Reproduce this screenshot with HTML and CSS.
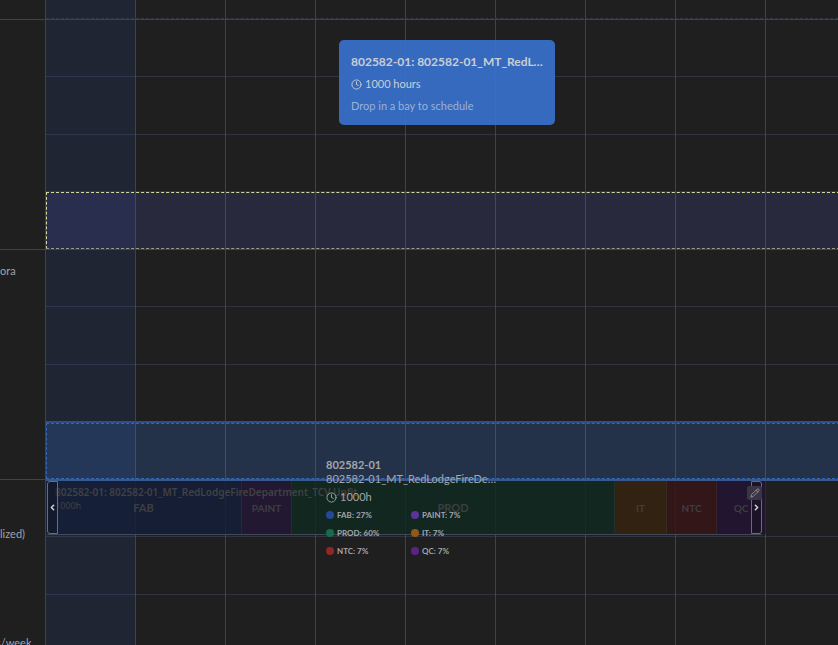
FILE: index.html
```html
<!DOCTYPE html>
<html lang="en">
<head>
<meta charset="utf-8">
<title>Bay schedule</title>
<link rel="stylesheet" href="styles.css">
</head>
<body>
<main class="board">
  <section class="team team-cut">
    <div class="team-label"></div>
    <div class="lanes"><div class="lane lane-idle"></div></div>
  </section>
  <section class="team">
    <div class="team-label"></div>
    <div class="lanes">
      <div class="lane"></div>
      <div class="lane"></div>
      <div class="lane"></div>
      <div class="lane lane-open"></div>
    </div>
  </section>
  <section class="team">
    <div class="team-label"><span class="label-name">ora</span></div>
    <div class="lanes">
      <div class="lane"></div>
      <div class="lane"></div>
      <div class="lane"></div>
      <div class="lane lane-target"></div>
    </div>
  </section>
  <section class="team">
    <div class="team-label"><span class="label-type">lized)</span><span class="label-rate">s/week</span></div>
    <div class="lanes">
      <div class="lane">
        <article class="project">
          <div class="phases">
            <div class="phase fab">FAB</div>
            <div class="phase paint small">PAINT</div>
            <div class="phase prod">PROD</div>
            <div class="phase it small">IT</div>
            <div class="phase ntc small">NTC</div>
            <div class="phase qc small">QC</div>
          </div>
          <div class="project-text">
            <h3>802582-01: 802582-01_MT_RedLodgeFireDepartment_TCV Upfit</h3>
            <p>1000h</p>
          </div>
          <div class="frame"></div>
          <button class="handle start" aria-label="Move start"><svg viewBox="0 0 24 24"><path d="M15 18l-6-6 6-6"/></svg></button>
          <button class="handle end" aria-label="Move end"><svg viewBox="0 0 24 24"><path d="M9 18l6-6-6-6"/></svg></button>
          <button class="edit" aria-label="Edit project"><svg viewBox="0 0 24 24"><path d="M17 3a2.8 2.8 0 0 1 4 4L7.500 20.500 2 22l1.500-5.500zM14.500 5.500l4 4"/></svg></button>
        </article>
      </div>
      <div class="lane"></div>
      <div class="lane"></div>
      <div class="lane"></div>
    </div>
  </section>

  <aside class="drag-card">
    <h2>802582-01: 802582-01_MT_RedLodgeFireDepartment</h2>
    <p class="hours"><svg viewBox="0 0 24 24"><circle cx="12" cy="12" r="10"/><path d="M12 6v6l4 2"/></svg>1000 hours</p>
    <p class="hint">Drop in a bay to schedule</p>
  </aside>

  <aside class="ghost">
    <h2>802582-01</h2>
    <p class="ghost-name">802582-01_MT_RedLodgeFireDepartment</p>
    <p class="hours"><svg viewBox="0 0 24 24"><circle cx="12" cy="12" r="10"/><path d="M12 6v6l4 2"/></svg>1000h</p>
    <ul class="legend">
      <li class="key-fab">FAB: 27%</li>
      <li class="key-paint">PAINT: 7%</li>
      <li class="key-prod">PROD: 60%</li>
      <li class="key-it">IT: 7%</li>
      <li class="key-ntc">NTC: 7%</li>
      <li class="key-qc">QC: 7%</li>
    </ul>
  </aside>
</main>
</body>
</html>
```
FILE: styles.css
```css
* { box-sizing: border-box; }

body {
  margin: 0;
  background: #1f1f1f;
  color: #9ca3af;
  font-family: Lato, "Noto Sans", sans-serif;
  font-size: 11px;
  line-height: 16px;
}

h2, h3, p, ul { margin: 0; padding: 0; }
button { padding: 0; font: inherit; }
svg { fill: none; stroke: currentColor; stroke-width: 2; stroke-linecap: round; stroke-linejoin: round; }

.board {
  position: relative;
  height: 100vh;
  overflow: hidden;
}

.team {
  display: grid;
  grid-template-columns: 45px 1fr;
  height: 230px;
  border-bottom: 1px solid #3b4250;
}
.team-cut { height: 20px; }

.team-label {
  display: flex;
  flex-direction: column;
  justify-content: space-between;
  padding-top: 13px;
}
.label-type { margin-top: 33px; }
.label-rate { margin: 0 0 58px -4px; }

/* Week columns are 90px wide; the first one is the current week. */
.lanes {
  display: grid;
  grid-auto-rows: 1fr;
  min-width: 0;
  background:
    repeating-linear-gradient(90deg, #3b4250 0 1px, transparent 1px 90px),
    linear-gradient(90deg, #1f2533 90px, transparent 90px);
}

.lane {
  position: relative;
  min-width: 0;
  margin-left: 1px;
  border-bottom: 1px solid rgba(75, 85, 120, 0.4);
}
.lane:last-child { border-bottom: 0; }
.lane.lane-idle { border-bottom: 1px dashed #333a45; }

.lane.lane-open {
  margin-right: -2px;
  border: 1px dashed #d3dc9c;
  border-bottom-color: #979e87;
  background: rgba(99, 102, 241, 0.15);
}
.lane.lane-target {
  margin-top: 1px;
  margin-right: -2px;
  border: 1px dashed #3268b8;
  background: rgba(59, 130, 246, 0.2);
  box-shadow: 0 -2px #2b4f8a, 0 2px #38598f;
}

.project {
  position: absolute;
  top: 1px;
  left: 0;
  width: 720px;
  height: 54px;
}
.phases {
  display: grid;
  grid-template-columns: 196fr 50fr 323fr 52fr 50fr 49fr;
  height: 53px;
}
.phase {
  display: grid;
  place-items: center;
  border-right: 1px solid rgba(70, 70, 80, 0.3);
  color: #3e3e40;
  font-weight: 700;
}
.small { font-size: 10px; }
.fab { background: rgba(20, 31, 57, 0.85); }
.paint { background: rgba(36, 23, 54, 0.85); }
.prod { background: rgba(16, 41, 33, 0.85); }
.it { background: rgba(54, 35, 16, 0.85); }
.ntc { background: rgba(54, 21, 23, 0.85); }
.qc { background: rgba(34, 20, 50, 0.85); }

.project-text {
  position: absolute;
  top: 3px;
  left: 9px;
  color: #414143;
  font-family: "Noto Sans", sans-serif;
  white-space: nowrap;
}
.project-text h3 { font-size: 10px; font-weight: 600; }
.project-text p { font-size: 9px; line-height: 12px; }

.frame {
  position: absolute;
  inset: 0 4px 0 1px;
  border-bottom: 1px solid #434955;
}
.handle {
  position: absolute;
  top: 0;
  width: 11px;
  height: 53px;
  border: 1px solid #696d78;
  border-radius: 3px 0 0 3px;
  background: rgba(20, 20, 30, 0.4);
  color: #d1d5db;
}
.handle svg { display: block; width: 9px; height: 9px; stroke-width: 4; }
.start { left: 1px; }
.end { right: 4px; border-radius: 0 3px 3px 0; }
.edit {
  position: absolute;
  top: 5px;
  right: 4px;
  display: grid;
  place-items: center;
  width: 15px;
  height: 14px;
  border: 0;
  border-radius: 2px;
  background: #3a3542;
  color: #9b9ba3;
}
.edit svg { width: 10px; height: 10px; }

.drag-card {
  position: absolute;
  top: 40px;
  left: 339px;
  width: 216px;
  padding: 12px 12px 11px;
  border-radius: 5px;
  background: rgba(56, 112, 202, 0.94);
  color: #c9ced6;
}
.drag-card h2 {
  overflow: hidden;
  font-size: 12px;
  font-weight: 700;
  line-height: 19px;
  text-overflow: ellipsis;
  white-space: nowrap;
}
.hours {
  display: flex;
  align-items: center;
  gap: 3px;
}
.hours svg { width: 11px; height: 11px; }
.drag-card .hours { margin-top: 5px; }
.hint { margin-top: 6px; color: #9bb1d4; }

.ghost {
  position: absolute;
  top: 458px;
  left: 326px;
  width: 170px;
  color: #a3a6ab;
}
.ghost h2 { font-size: 11px; font-weight: 700; line-height: 14px; }
.ghost-name {
  overflow: hidden;
  line-height: 14px;
  text-overflow: ellipsis;
  white-space: nowrap;
}
.ghost .hours { margin-top: 3px; }
.legend {
  display: grid;
  grid-template-columns: 1fr 1fr;
  margin-top: 1px;
  font-size: 8px;
  font-weight: 700;
  line-height: 18px;
  list-style: none;
}
.legend li {
  display: flex;
  align-items: center;
  gap: 3px;
  white-space: nowrap;
}
.legend li::before {
  content: "";
  width: 8px;
  height: 8px;
  border-radius: 50%;
  background: #25489a;
}
.legend .key-paint::before { background: #5b3399; }
.legend .key-prod::before { background: #176a4c; }
.legend .key-it::before { background: #925816; }
.legend .key-ntc::before { background: #8f2727; }
.legend .key-qc::before { background: #5b2388; }
```
